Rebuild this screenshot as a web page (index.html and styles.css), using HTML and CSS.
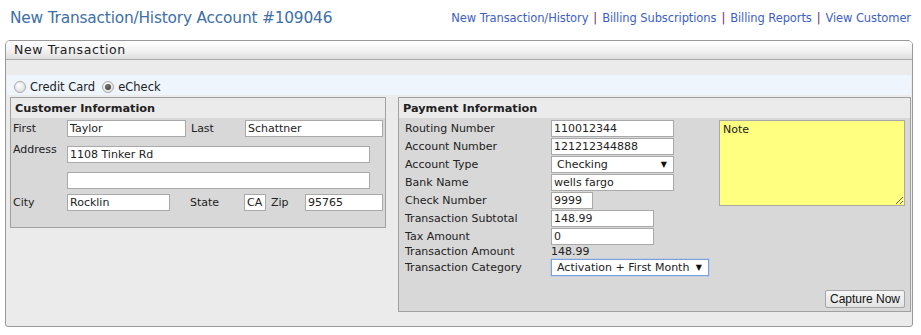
FILE: index.html
```html
<!DOCTYPE html>
<html>
<head>
<meta charset="utf-8">
<link rel="stylesheet" href="styles.css">
</head>
<body>
<div class="top">
  <h1 class="title">New Transaction/History Account #109046</h1>
  <nav class="links">
    <a href="#">New Transaction/History</a><span class="sep">|</span><a href="#">Billing Subscriptions</a><span class="sep">|</span><a href="#">Billing Reports</a><span class="sep">|</span><a href="#">View Customer</a>
  </nav>
</div>
<div class="panel">
  <div class="panel-head">New Transaction</div>
  <div class="panel-body">
    <div class="radios">
      <label class="radio"><span class="dot"></span>Credit Card</label>
      <label class="radio"><span class="dot on"></span>eCheck</label>
    </div>
    <div class="cols">
      <div class="box cust">
        <div class="box-head">Customer Information</div>
        <div class="box-body">
          <div class="row r1">
            <span class="lbl">First</span><input class="in w118" value="Taylor">
            <span class="lbl l2">Last</span><input class="in w138" value="Schattner">
          </div>
          <div class="row r2">
            <span class="lbl lbl-top">Address</span><input class="in w303" value="1108 Tinker Rd">
          </div>
          <div class="row r3">
            <span class="lbl"></span><input class="in w303" value="">
          </div>
          <div class="row r4">
            <span class="lbl">City</span><input class="in w103" value="Rocklin">
            <span class="lbl l2">State</span><input class="in w21" value="CA">
            <span class="lbl zip">Zip</span><input class="in w78" value="95765">
          </div>
        </div>
      </div>
      <div class="box pay">
        <div class="box-head">Payment Information</div>
        <div class="box-body pay-body">
          <div class="pay-main">
            <div class="pay-grid">
              <span class="plbl">Routing Number</span><input class="in w123" value="110012344">
              <span class="plbl">Account Number</span><input class="in w123" value="121212344888">
              <span class="plbl">Account Type</span><div class="sel w123"><span>Checking</span><span class="arr">▼</span></div>
              <span class="plbl">Bank Name</span><input class="in w123" value="wells fargo">
              <span class="plbl">Check Number</span><input class="in w42" value="9999">
              <span class="plbl">Transaction Subtotal</span><input class="in w103" value="148.99">
              <span class="plbl">Tax Amount</span><input class="in w103" value="0">
              <span class="plbl amt">Transaction Amount</span><span class="val amt">148.99</span>
              <span class="plbl">Transaction Category</span><div class="sel w158 focus"><span>Activation + First Month</span><span class="arr">▼</span></div>
            </div>
            <textarea class="note">Note</textarea>
          </div>
          <div class="actions"><button class="btn">Capture Now</button></div>
        </div>
      </div>
    </div>
  </div>
</div>
</body>
</html>
```
FILE: styles.css
```css
* { box-sizing: border-box; }
html, body { margin: 0; padding: 0; background: #fff; }
body {
  font-family: "DejaVu Sans", Verdana, sans-serif;
  font-size: 11px;
  color: #222;
  width: 921px;
  height: 335px;
  overflow: hidden;
}
.top {
  display: flex;
  justify-content: space-between;
  align-items: flex-start;
  padding: 8px 10px 0 10px;
  height: 40px;
}
.title {
  margin: 0;
  font-weight: normal;
  font-size: 15.4px;
  line-height: 20px;
  color: #3d6fa8;
  letter-spacing: -0.2px;
}
.links {
  font-size: 11.5px;
  line-height: 20px;
  letter-spacing: -0.1px;
}
.links a { color: #3d5fc4; text-decoration: none; }
.links .sep { color: #6a2a80; margin: 0 5px; }

.panel {
  margin: 0 8px 0 5px;
  border: 1px solid #999;
  border-radius: 5px 5px 3px 3px;
  height: 287px;
  background: #ebebeb;
  overflow: hidden;
}
.panel-head {
  height: 19px;
  border-bottom: 1px solid #aaa;
  background: linear-gradient(#ffffff, #f3f3f3 50%, #dedede);
  padding-left: 8px;
  font-size: 12.5px;
  line-height: 18px;
  letter-spacing: 0.6px;
  color: #222;
}
.panel-body { padding: 15px 1px 0 1px; }
.radios {
  background: #eef5fc;
  height: 20px;
  display: flex;
  align-items: center;
  padding: 4px 0 0 7px;
  gap: 7px;
  font-size: 11.5px;
}
.radio { display: flex; align-items: center; gap: 4px; color: #222; }
.dot {
  width: 12px; height: 12px; border-radius: 50%;
  border: 1px solid #a8a8a8;
  background: radial-gradient(circle at 40% 35%, #fdfdfd, #d8d8d8);
  display: inline-flex; align-items: center; justify-content: center;
}
.dot.on::after {
  content: ""; width: 6px; height: 6px; border-radius: 50%;
  background: radial-gradient(circle at 40% 35%, #777, #333);
}
.cols {
  display: flex;
  justify-content: space-between;
  padding: 2px 0 0 3px;
}
.box {
  border: 1px solid #a0a0a0;
  background: #d8d8d8;
}
.cust { width: 376px; height: 131px; }
.pay { width: 513px; height: 215px; }
.box-head {
  background: #ebebeb;
  height: 20px;
  font-weight: bold;
  line-height: 21px;
  padding-left: 4px;
  font-size: 11.3px;
  color: #222;
}
.box-body { padding: 2px 0 0 2px; }
.row { display: flex; align-items: center; height: 17px; }
.r2, .r3 { margin-top: 9px; }
.r4 { margin-top: 5px; }
.lbl { width: 54px; flex: none; white-space: nowrap; }
.lbl-top { align-self: flex-start; margin-top: -3px; }
.l2 { margin-left: 5px; }
.r4 .l2 { margin-left: 20px; }
.zip { width: 34px; margin-left: 5px; }
.in {
  height: 17px;
  border: 1px solid #a9a9a9;
  background: #fff;
  font-family: "DejaVu Sans", Verdana, sans-serif;
  font-size: 11px;
  color: #222;
  padding: 0 2px;
  margin: 0;
  flex: none;
  outline: none;
}
.w118 { width: 119px; }
.w138 { width: 138px; }
.w303 { width: 303px; }
.w103 { width: 103px; }
.w21 { width: 22px; }
.w78 { width: 78px; }
.w123 { width: 123px; }
.w42 { width: 42px; }
.w158 { width: 158px; }

.pay-body { padding: 2px 5px 0 6px; }
.pay-main { display: flex; justify-content: space-between; }
.pay-grid {
  display: grid;
  grid-template-columns: 146px auto;
  row-gap: 1px;
  align-items: center;
  align-content: start;
  justify-items: start;
}
.plbl { line-height: 17px; white-space: nowrap; }
.plbl.amt, .val.amt { line-height: 13px; margin-top: -1px; }
.sel {
  height: 17px;
  border: 1px solid #a9a9a9;
  background: #fff;
  display: flex;
  justify-content: space-between;
  align-items: center;
  padding: 0 6px 0 5px;
  font-size: 11px;
  color: #222;
  white-space: nowrap;
}
.sel.focus { border-color: #7ea0d8; box-shadow: 0 0 0 0.5px #a9c2ec; }
.arr { font-size: 8px; color: #111; }
.note {
  width: 186px;
  height: 86px;
  background: #ffff80;
  border: 1px solid #a9a9a9;
  font-family: "DejaVu Sans", Verdana, sans-serif;
  font-size: 11px;
  color: #222;
  padding: 2px 3px;
  margin: 0;
  resize: both;
}
.actions { display: flex; justify-content: flex-end; margin-top: 14px; }
.btn {
  font-family: "Liberation Sans", Arial, sans-serif;
  font-size: 12px;
  color: #111;
  height: 18px;
  width: 80px;
  padding: 0;
  border: 1px solid #a6a6a6;
  border-radius: 2px;
  background: linear-gradient(#f6f6f6, #e3e3e3);
}
```
